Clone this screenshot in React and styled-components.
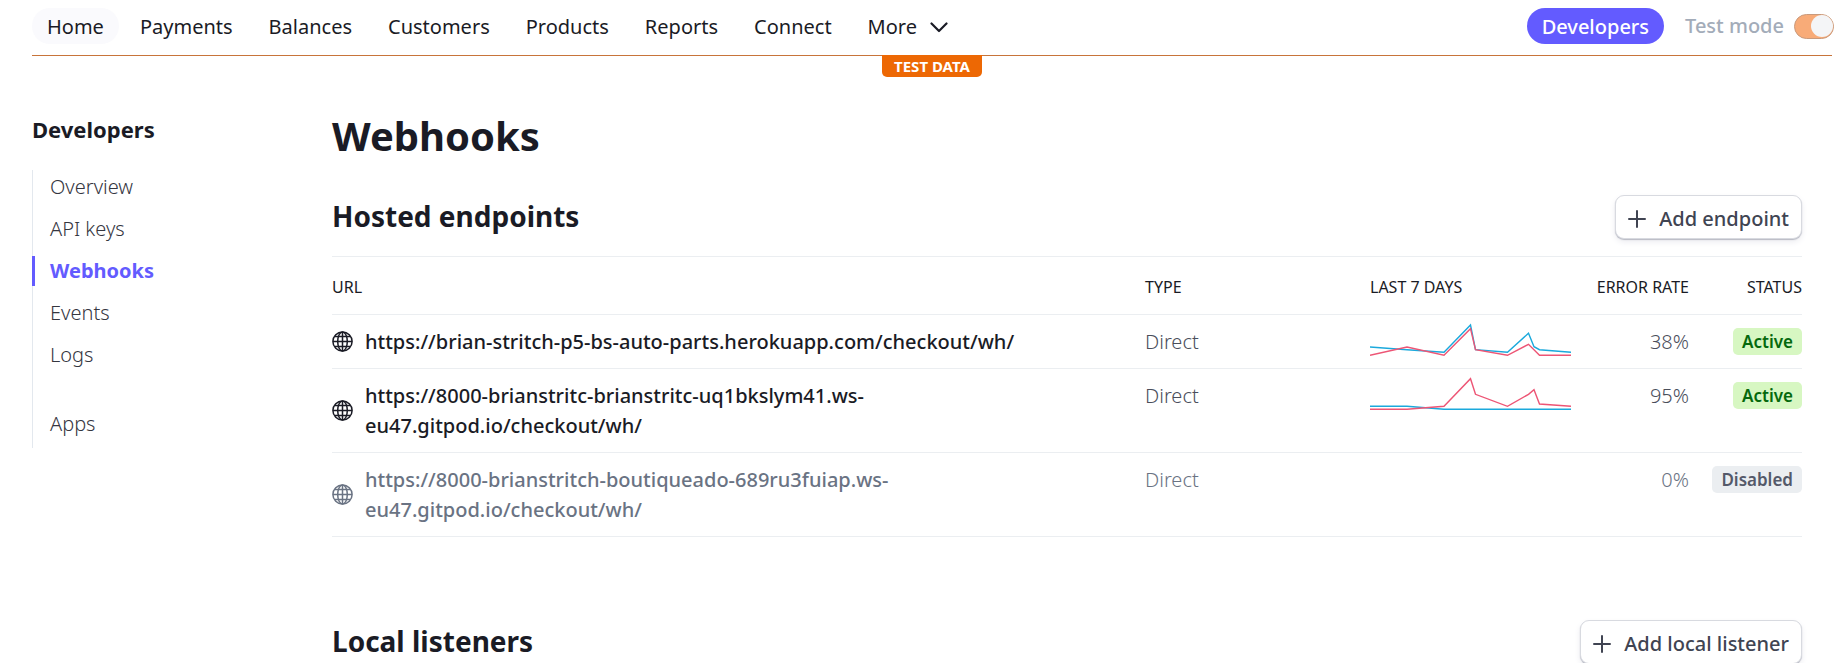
import React from "react";
import styled, { createGlobalStyle } from "styled-components";

const GlobalStyle = createGlobalStyle`
  *, *::before, *::after { box-sizing: border-box; }
  body {
    margin: 0;
    background: #fff;
    color: #1a1b25;
    font-family: "Noto Sans", "Open Sans", sans-serif;
    font-size: 20px;
    line-height: 30px;
  }
  a { color: inherit; text-decoration: none; }
  h1, h2, ul { margin: 0; padding: 0; }
`;

const Page = styled.div`
  padding: 0 3px 0 32px;
`;

const TopBar = styled.header`
  position: relative;
  display: flex;
  align-items: center;
  justify-content: space-between;
  height: 56px;
  padding-bottom: 3px;
  border-bottom: 1px solid #c8743a;
`;

const TopNav = styled.nav`
  display: flex;
  gap: 6px;
`;

const NavLink = styled.a`
  display: flex;
  align-items: center;
  gap: 13px;
  height: 36px;
  padding: 2px 15px 0;
  border-radius: 18px;
  background: ${(p) => (p.$filled ? "#fafafd" : "transparent")};
  white-space: nowrap;
`;

const Tools = styled.div`
  display: flex;
  align-items: center;
  gap: 21px;
  margin-right: -2px;
`;

const DevelopersLink = styled(NavLink)`
  background: #635bff;
  color: #fff;
  font-weight: 500;
`;

const TestMode = styled.label`
  display: flex;
  align-items: center;
  gap: 10px;
  color: #a3acb9;
  font-weight: 500;
  white-space: nowrap;
`;

const Toggle = styled.input`
  appearance: none;
  display: flex;
  align-items: center;
  justify-content: flex-end;
  width: 40px;
  height: 25px;
  margin: 0;
  border: 1px solid #c99a7c;
  border-radius: 13px;
  background: #f8ab78;

  &::before {
    content: "";
    width: 22px;
    height: 22px;
    border-radius: 50%;
    background: #f4f5f7;
  }
`;

const TestBadge = styled.div`
  position: absolute;
  top: 55px;
  left: 50%;
  width: 100px;
  height: 22px;
  margin-left: -50px;
  border-radius: 0 0 5px 5px;
  background: #ed6804;
  color: #fff;
  font-size: 15px;
  font-weight: 700;
  line-height: 22px;
  text-align: center;
`;

const Body = styled.div`
  display: flex;
  padding: 52px 30px 0 0;
`;

const SideBar = styled.aside`
  flex: 0 0 300px;
  padding-top: 6px;
`;

const SideTitle = styled.h2`
  font-size: 22px;
  line-height: 30px;
  font-weight: 700;
`;

const SideList = styled.ul`
  display: flex;
  flex-direction: column;
  gap: 12px;
  margin-top: 26px;
  padding: 2px 0 9px;
  border-left: 1px solid #e3e8ee;
  list-style: none;
`;

const SideItem = styled.li`
  margin: ${(p) => (p.$apart ? "27px" : "0")} 0 0 -1px;
`;

const SideLink = styled.a`
  display: block;
  padding-left: ${(p) => (p.$current ? "15px" : "18px")};
  border-left: ${(p) => (p.$current ? "3px solid #635bff" : "0")};
  color: ${(p) => (p.$current ? "#635bff" : "#35363f")};
  font-weight: ${(p) => (p.$current ? 700 : 350)};
`;

const Main = styled.main`
  flex: 1;
  min-width: 0;
`;

const PageTitle = styled.h1`
  font-size: 40px;
  line-height: 56px;
  font-weight: 700;
`;

const SectionHead = styled.div`
  display: flex;
  align-items: center;
  justify-content: space-between;
  margin-top: ${(p) => (p.$spaced ? "83px" : "31px")};
`;

const SectionTitle = styled.h2`
  padding-bottom: 3px;
  font-size: 28px;
  line-height: 36px;
  font-weight: 700;
`;

const Button = styled.button`
  display: flex;
  align-items: center;
  gap: 13px;
  height: 44px;
  padding: 3px 12px 0;
  border: 1px solid #d8dae0;
  border-radius: 9px;
  background: #fff;
  box-shadow: 0 1px 1px #b8bac4, 0 3px 6px #ececf1;
  color: #404452;
  font: inherit;
  font-weight: 500;
  white-space: nowrap;
`;

const Table = styled.table`
  width: 100%;
  margin-top: 17px;
  table-layout: fixed;
  border-collapse: separate;
  border-spacing: 0;
  border-top: 1px solid #ebeef1;
`;

const HeadCell = styled.th`
  width: ${(p) => p.$width || "auto"};
  height: 58px;
  padding: 2px 0 0;
  border-bottom: 1px solid #ebeef1;
  font-size: 16px;
  line-height: 24px;
  font-weight: 450;
  text-align: ${(p) => (p.$end ? "right" : "left")};
  white-space: nowrap;
`;

const Row = styled.tr`
  color: ${(p) => (p.$muted ? "#6a7383" : "#1a1b25")};
`;

const Cell = styled.td`
  padding: 12px 0 11px;
  border-bottom: 1px solid #ebeef1;
  color: ${(p) => (p.$muted ? "#6a7383" : "#4a4e5b")};
  font-weight: 350;
  text-align: ${(p) => (p.$end ? "right" : "left")};
  vertical-align: top;
`;

const UrlCell = styled(Cell)`
  padding-right: 60px;
  color: inherit;
`;

const UrlLink = styled.a`
  display: flex;
  align-items: center;
  gap: 12px;
  font-weight: 500;

  svg { flex: none; margin-bottom: 2px; }
`;

const ChartCell = styled(Cell)`
  padding: 0;
`;

const Spark = styled.svg`
  display: block;
  width: 201px;
  height: 53px;
`;

const Badge = styled.span`
  display: block;
  width: fit-content;
  margin: 1px 0 0 auto;
  padding: 0 9px;
  border-radius: 5px;
  background: ${(p) => (p.$active ? "#d7f7c2" : "#ebeef1")};
  color: ${(p) => (p.$active ? "#05690d" : "#545969")};
  font-size: 17px;
  line-height: 27px;
  font-weight: 600;
`;

const Globe = () => (
  <svg width="21" height="21" viewBox="0 0 21 21" fill="none" stroke="currentColor" strokeWidth="1.5" aria-hidden="true">
    <circle cx="10.5" cy="10.5" r="9.6" />
    <ellipse cx="10.5" cy="10.5" rx="4.8" ry="9.6" />
    <path d="M10.5 1v19M1 10.5h19M2.6 5.6h15.8M2.6 15.4h15.8" />
  </svg>
);

const Plus = () => (
  <svg width="18" height="18" viewBox="0 0 18 18" fill="none" stroke="currentColor" strokeWidth="2" strokeLinecap="round" aria-hidden="true">
    <path d="M9 1v16M1 9h16" />
  </svg>
);

const Chevron = () => (
  <svg width="18" height="12" viewBox="0 0 18 12" fill="none" stroke="currentColor" strokeWidth="2.2" strokeLinecap="round" strokeLinejoin="round" aria-hidden="true">
    <path d="M1.5 2.5L9 10l7.5-7.5" />
  </svg>
);

const navItems = ["Home", "Payments", "Balances", "Customers", "Products", "Reports", "Connect"];
const sideItems = ["Overview", "API keys", "Webhooks", "Events", "Logs", "Apps"];

const endpoints = [
  {
    url: "https://brian-stritch-p5-bs-auto-parts.herokuapp.com/checkout/wh/",
    rate: "38%",
    active: true,
    total: "0,32 37,34.7 74,37.3 100.5,10 105.5,34.7 137.5,37.3 158.5,18.3 164,31.7 169.5,34.7 201,37.3",
    failed: "0,40.3 37,32 74,40.3 100.5,13.7 105.5,34.7 137.5,40.3 158.5,29.3 169.5,40.3 201,40.3",
  },
  {
    url: "https://8000-brianstritc-brianstritc-uq1bkslym41.ws-eu47.gitpod.io/checkout/wh/",
    rate: "95%",
    active: true,
    total: "0,37.3 37,37.3 74,40.3 201,40.3",
    failed: "0,40.3 37,40.3 74,37.3 100.5,9.7 105.5,25.3 137.5,37.3 158.5,25.3 164,20.7 169.5,35 201,37.3",
  },
  {
    url: "https://8000-brianstritch-boutiqueado-689ru3fuiap.ws-eu47.gitpod.io/checkout/wh/",
    rate: "0%",
    active: false,
  },
];

export default function App() {
  return (
    <>
      <GlobalStyle />
      <Page>
        <TopBar>
          <TopNav>
            {navItems.map((item) => (
              <NavLink key={item} href="#" $filled={item === "Home"}>{item}</NavLink>
            ))}
            <NavLink href="#">More <Chevron /></NavLink>
          </TopNav>
          <Tools>
            <DevelopersLink href="#">Developers</DevelopersLink>
            <TestMode>
              Test mode
              <Toggle type="checkbox" role="switch" defaultChecked />
            </TestMode>
          </Tools>
          <TestBadge>TEST DATA</TestBadge>
        </TopBar>
        <Body>
          <SideBar>
            <SideTitle>Developers</SideTitle>
            <SideList>
              {sideItems.map((item) => (
                <SideItem key={item} $apart={item === "Apps"}>
                  <SideLink href="#" $current={item === "Webhooks"}>{item}</SideLink>
                </SideItem>
              ))}
            </SideList>
          </SideBar>
          <Main>
            <PageTitle>Webhooks</PageTitle>
            <SectionHead>
              <SectionTitle>Hosted endpoints</SectionTitle>
              <Button type="button"><Plus />Add endpoint</Button>
            </SectionHead>
            <Table>
              <thead>
                <tr>
                  <HeadCell>URL</HeadCell>
                  <HeadCell $width="225px">TYPE</HeadCell>
                  <HeadCell $width="220px">LAST 7 DAYS</HeadCell>
                  <HeadCell $width="99px" $end>ERROR RATE</HeadCell>
                  <HeadCell $width="113px" $end>STATUS</HeadCell>
                </tr>
              </thead>
              <tbody>
                {endpoints.map((e) => (
                  <Row key={e.url} $muted={!e.active}>
                    <UrlCell><UrlLink href="#"><Globe /><span>{e.url}</span></UrlLink></UrlCell>
                    <Cell $muted={!e.active}>Direct</Cell>
                    <ChartCell>
                      {e.total && (
                        <Spark viewBox="0 0 201 53" fill="none" strokeWidth="1.4" role="img" aria-label="Events in the last 7 days">
                          <polyline points={e.total} stroke="#1ba9dc" />
                          <polyline points={e.failed} stroke="#ed5575" />
                        </Spark>
                      )}
                    </ChartCell>
                    <Cell $end $muted={!e.active}>{e.rate}</Cell>
                    <Cell $end><Badge $active={e.active}>{e.active ? "Active" : "Disabled"}</Badge></Cell>
                  </Row>
                ))}
              </tbody>
            </Table>
            <SectionHead $spaced>
              <SectionTitle>Local listeners</SectionTitle>
              <Button type="button"><Plus />Add local listener</Button>
            </SectionHead>
          </Main>
        </Body>
      </Page>
    </>
  );
}
